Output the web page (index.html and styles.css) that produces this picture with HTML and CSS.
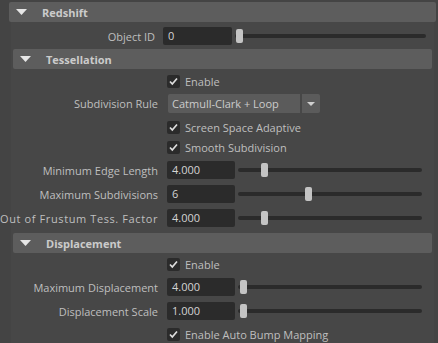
FILE: index.html
```html
<!DOCTYPE html>
<html lang="en">
<head>
    <meta charset="UTF-8">
    <title>Redshift Attributes</title>
    <link rel="stylesheet" href="styles.css">
</head>
<body>
    <div class="panel">
        <div class="frame">
            <div class="frame-head">
                <svg class="arrow" width="11" height="6" viewBox="0 0 11 6"><polygon points="0,0 11,0 5.5,6" fill="#e6e6e6"/></svg>
                Redshift
            </div>
            <div class="frame-body top-body">
                <div class="row field-row">
                    <div class="lbl"><span>Object ID</span></div>
                    <div class="field">0</div>
                    <div class="slider"><span class="thumb" style="left: 1px"></span></div>
                </div>

                <div class="frame sub first-sub">
                    <div class="frame-head">
                        <svg class="arrow" width="11" height="6" viewBox="0 0 11 6"><polygon points="0,0 11,0 5.5,6" fill="#e6e6e6"/></svg>
                        Tessellation
                    </div>
                    <div class="frame-body tess-body">
                        <div class="row check-row">
                            <span class="check"><svg width="13" height="13" viewBox="0 0 13 13"><path d="M3 6.5 L5.3 9 L10 3.5" fill="none" stroke="#dedede" stroke-width="1.7"/></svg></span>
                            Enable
                        </div>
                        <div class="row drop-row">
                            <div class="lbl"><span>Subdivision Rule</span></div>
                            <div class="dropdown">
                                <span class="drop-text">Catmull-Clark + Loop</span>
                                <span class="drop-btn"><svg width="8" height="4" viewBox="0 0 8 4"><polygon points="0,0 8,0 4,4" fill="#cfcfcf"/></svg></span>
                            </div>
                        </div>
                        <div class="row check-row gap4">
                            <span class="check"><svg width="13" height="13" viewBox="0 0 13 13"><path d="M3 6.5 L5.3 9 L10 3.5" fill="none" stroke="#dedede" stroke-width="1.7"/></svg></span>
                            Screen Space Adaptive
                        </div>
                        <div class="row check-row">
                            <span class="check"><svg width="13" height="13" viewBox="0 0 13 13"><path d="M3 6.5 L5.3 9 L10 3.5" fill="none" stroke="#dedede" stroke-width="1.7"/></svg></span>
                            Smooth Subdivision
                        </div>
                        <div class="row field-row gap4">
                            <div class="lbl"><span>Minimum Edge Length</span></div>
                            <div class="field">4.000</div>
                            <div class="slider"><span class="thumb" style="left: 23px"></span></div>
                        </div>
                        <div class="row field-row gap6">
                            <div class="lbl"><span>Maximum Subdivisions</span></div>
                            <div class="field">6</div>
                            <div class="slider"><span class="thumb" style="left: 67px"></span></div>
                        </div>
                        <div class="row field-row gap6">
                            <div class="lbl lbl-wide"><span>Out of Frustum Tess. Factor</span></div>
                            <div class="field">4.000</div>
                            <div class="slider"><span class="thumb" style="left: 23px"></span></div>
                        </div>
                    </div>
                </div>

                <div class="frame sub">
                    <div class="frame-head">
                        <svg class="arrow" width="11" height="6" viewBox="0 0 11 6"><polygon points="0,0 11,0 5.5,6" fill="#e6e6e6"/></svg>
                        Displacement
                    </div>
                    <div class="frame-body disp-body">
                        <div class="row check-row">
                            <span class="check"><svg width="13" height="13" viewBox="0 0 13 13"><path d="M3 6.5 L5.3 9 L10 3.5" fill="none" stroke="#dedede" stroke-width="1.7"/></svg></span>
                            Enable
                        </div>
                        <div class="row field-row gap4">
                            <div class="lbl"><span>Maximum Displacement</span></div>
                            <div class="field">4.000</div>
                            <div class="slider"><span class="thumb" style="left: 2px"></span></div>
                        </div>
                        <div class="row field-row gap6">
                            <div class="lbl"><span>Displacement Scale</span></div>
                            <div class="field">1.000</div>
                            <div class="slider"><span class="thumb" style="left: 2px"></span></div>
                        </div>
                        <div class="row check-row gap4">
                            <span class="check"><svg width="13" height="13" viewBox="0 0 13 13"><path d="M3 6.5 L5.3 9 L10 3.5" fill="none" stroke="#dedede" stroke-width="1.7"/></svg></span>
                            Enable Auto Bump Mapping
                        </div>
                    </div>
                </div>
            </div>
        </div>
    </div>
</body>
</html>
```

FILE: styles.css
```css
body {
    margin: 0;
    height: 343px;
    overflow: hidden;
    background-color: #444444;
    font-family: "Open Sans", "Noto Sans", sans-serif;
    font-size: 11px;
    color: #bfbfbf;
}

.panel {
    padding: 2px 2px 0 9px;
}

.frame-head {
    display: flex;
    align-items: center;
    height: 20px;
    background-color: #5d5d5d;
    border-radius: 2px;
    font-weight: bold;
    color: #cbcbcb;
}

.arrow {
    margin: 0 15px 0 7px;
}

.top-body {
    margin: 0 2px;
    padding-top: 5px;
    background-color: #474747;
}

.sub {
    margin: 0 2px;
}

.first-sub {
    margin-top: 4px;
}

.tess-body {
    padding: 2px 0 6px;
}

.disp-body {
    padding-top: 1px;
}

.row {
    display: flex;
    align-items: center;
}

.gap4 {
    margin-top: 4px;
}

.gap6 {
    margin-top: 6px;
}

.field-row {
    height: 18px;
}

.lbl {
    display: flex;
    justify-content: flex-end;
    flex-shrink: 0;
    width: 144px;
    white-space: nowrap;
}

.lbl-wide {
    letter-spacing: 0.6px;
}

.field {
    flex-shrink: 0;
    box-sizing: border-box;
    width: 69px;
    height: 18px;
    margin-left: 8px;
    padding-left: 5px;
    line-height: 18px;
    background-color: #2b2b2b;
    border-radius: 2px;
    color: #d4d4d4;
}

.slider {
    position: relative;
    flex: 1;
    height: 4px;
    margin: 0 8px 0 3px;
    background-color: #2b2b2b;
    border-radius: 2px;
}

.thumb {
    position: absolute;
    top: -5px;
    width: 7px;
    height: 14px;
    background-color: #c4c4c4;
    border-radius: 2px;
}

.sub .lbl {
    width: 145px;
}

.sub .field {
    width: 68px;
    margin-left: 9px;
}

.sub .slider {
    margin-right: 10px;
}

.check-row {
    height: 20px;
    padding-left: 154px;
}

.check {
    display: flex;
    width: 13px;
    height: 13px;
    margin-right: 5px;
    background-color: #2b2b2b;
    border-radius: 2px;
}

.drop-row {
    height: 19px;
    margin-top: 3px;
}

.dropdown {
    display: flex;
    width: 152px;
    height: 19px;
    margin-left: 10px;
    background-color: #5b5b5b;
    border-radius: 2px;
    color: #cccccc;
}

.drop-text {
    flex: 1;
    padding-left: 4px;
    line-height: 19px;
}

.drop-btn {
    display: flex;
    align-items: center;
    justify-content: center;
    width: 18px;
    border-left: 2px solid #474747;
}
```
